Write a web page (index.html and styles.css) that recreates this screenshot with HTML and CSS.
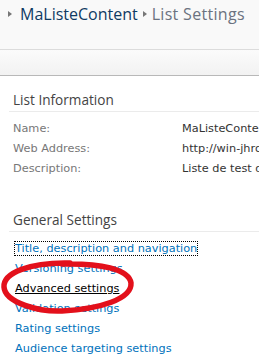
FILE: index.html
```html
<!DOCTYPE html>
<html>

<head>
    <meta charset="UTF-8">
    <title>List Settings</title>
    <link rel="stylesheet" href="styles.css">
</head>

<body>
    <div class="title-area">
        <div class="crumbs">
            <span class="crumb-arrow"></span>
            <a class="crumb-link" href="#">MaListeContent</a>
            <span class="crumb-arrow"></span>
            <span class="crumb-current">List Settings</span>
        </div>
    </div>
    <div class="ribbon"></div>
    <div class="page">
        <div class="section">
            <h3 class="section-title">List Information</h3>
            <div class="info">
                <span class="info-label">Name:</span>
                <span class="info-value">MaListeContent</span>
                <span class="info-label">Web Address:</span>
                <span class="info-value">http://win-jhrq/Lists/MaListeContent</span>
                <span class="info-label">Description:</span>
                <span class="info-value">Liste de test de content type</span>
            </div>
        </div>
        <div class="section">
            <h3 class="section-title">General Settings</h3>
            <ul class="links">
                <li><a href="#" class="focused">Title, description and navigation</a></li>
                <li><a href="#">Versioning settings</a></li>
                <li><a href="#" class="hovered">Advanced settings</a></li>
                <li><a href="#">Validation settings</a></li>
                <li><a href="#">Rating settings</a></li>
                <li><a href="#">Audience targeting settings</a></li>
            </ul>
        </div>
    </div>
    <!-- cercle rouge dessine a la main -->
    <svg class="mark" width="140" height="60" viewBox="0 0 140 60">
        <path d="M70 4 C 30 3, 3 14, 4 28 C 5 44, 40 53, 62 52 C 100 50, 132 40, 131 24 C 129 10, 100 4, 62 5"
            fill="none" stroke="#e3101b" stroke-width="5.5" stroke-linecap="round" />
    </svg>
</body>

</html>
```

FILE: styles.css
```css
* {
    margin: 0;
    padding: 0;
    list-style: none;
}

body {
    font-family: "DejaVu Sans", Verdana, sans-serif;
    font-size: 11.3px;
    background-color: #fff;
    color: #333;
    overflow: hidden;
}

.title-area {
    height: 49px;
    background-color: #f9f9f9;
    border-bottom: 1px solid #dcdcdc;
}

.crumbs {
    display: flex;
    align-items: center;
    padding: 3px 0 0 8px;
    white-space: nowrap;
    font-family: "Open Sans", sans-serif;
    font-size: 16px;
}

.crumb-arrow {
    width: 0;
    height: 0;
    border-top: 3.5px solid transparent;
    border-bottom: 3.5px solid transparent;
    border-left: 4px solid #777;
    margin-right: 8px;
}

.crumb-link {
    color: #0f3a63;
    text-decoration: none;
    margin-right: 5px;
}

.crumb-link + .crumb-arrow {
    margin-right: 5px;
}

.crumb-current {
    color: #6b7280;
    letter-spacing: 0.3px;
}

.ribbon {
    height: 25px;
    background: linear-gradient(#fbfbfb, #f2f2f2);
    border-bottom: 1px solid #b8b8b8;
}

.page {
    padding: 0 0 0 9px;
    overflow: hidden;
}

.section-title {
    font-family: "Open Sans", sans-serif;
    font-weight: normal;
    font-size: 13.6px;
    line-height: 18px;
    color: #444;
    padding: 15px 0 2px 4px;
    border-bottom: 1px solid #ebebeb;
}

.info {
    display: grid;
    grid-template-columns: 169px auto;
    grid-auto-rows: 20px;
    align-items: center;
    margin: 6px 0 18px 4px;
    white-space: nowrap;
    overflow: hidden;
}

.info-label {
    color: #777;
}

.info-value {
    color: #333;
    overflow: hidden;
}

.links {
    padding: 7px 0 0 6px;
}

.links li {
    height: 20px;
    line-height: 20px;
}

.links a {
    color: #0072bc;
    text-decoration: none;
    white-space: nowrap;
}

.links a.focused {
    outline: 1px dotted #000;
}

.links a.hovered {
    color: #000;
    text-decoration: underline;
}

.mark {
    position: absolute;
    left: 0;
    top: 259px;
}
```
